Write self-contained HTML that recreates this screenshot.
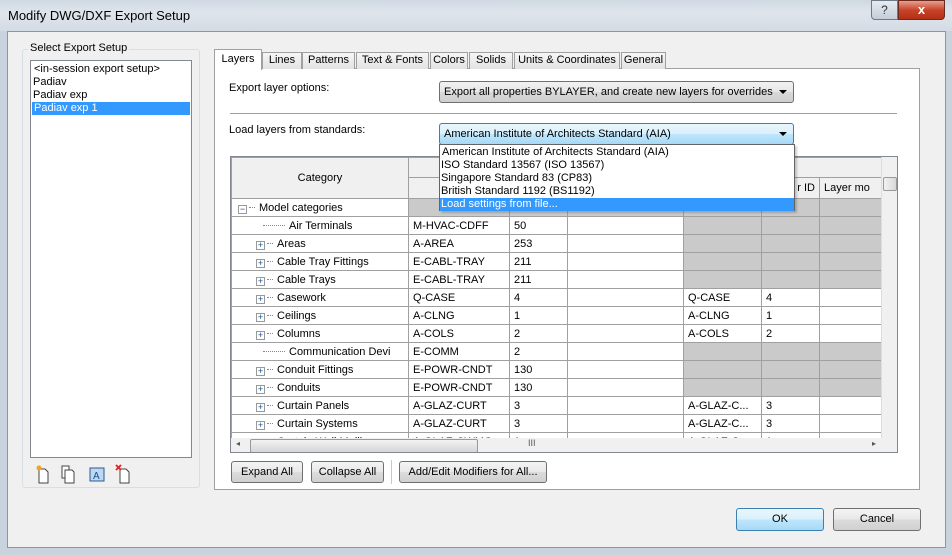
<!DOCTYPE html>
<html><head><style>
*{box-sizing:border-box;margin:0;padding:0}
body{width:952px;height:555px;overflow:hidden;font-family:"Liberation Sans",sans-serif;font-size:11px;color:#000;background:#c9d3dd;position:relative}
.abs{position:absolute}
.title{left:0;top:0;width:952px;height:31px;background:linear-gradient(#cfd8e2,#dfe5ec 40%,#d3dbe4);}
.client{left:7px;top:31px;width:939px;height:517px;background:#f0f0f0;border:1px solid #8a96a3}
.btn{position:absolute;border:1px solid #707070;border-radius:3px;background:linear-gradient(#f4f4f4,#e8e8e8 50%,#dcdcdc 51%,#d0d0d0);text-align:center;line-height:20px}
.tab{position:absolute;top:52px;height:17px;border:1px solid #a0a0a0;border-bottom:none;background:linear-gradient(#f6f6f6,#e2e2e2);line-height:15px;text-align:center;white-space:nowrap;overflow:hidden}
.combo{position:absolute;border:1px solid #707070;border-radius:3px;background:linear-gradient(#f2f2f2,#e6e6e6 50%,#d8d8d8 51%,#cfcfcf);padding-left:4px;line-height:20px;white-space:nowrap}
.arr{position:absolute;right:6px;top:8px;width:0;height:0;border-left:4px solid transparent;border-right:4px solid transparent;border-top:4px solid #000}
table{border-collapse:collapse;table-layout:fixed}
td{border:1px solid #a0a0a0;height:18px;padding:0 4px;white-space:nowrap;overflow:hidden;background:#fff}
.h{background:repeating-conic-gradient(#a8a8a8 0 25%,#ececec 0 50%) 0 0/2px 2px}
.pl{display:inline-block;width:9px;height:9px;border:1px solid #999;font-size:9px;line-height:7px;text-align:center;color:#1c4e91;margin-left:20px;margin-right:2px;vertical-align:-1px;background:#fff}
.dl{display:inline-block;width:6px;border-top:1px dotted #888;vertical-align:3px;margin-right:4px}
.lf{display:inline-block;width:22px;border-top:1px dotted #888;vertical-align:3px;margin-left:27px;margin-right:4px}
</style></head><body>
<div class="abs title"></div>
<div class="abs" style="left:8px;top:8px;font-size:13px">Modify DWG/DXF Export Setup</div>
<div class="abs" style="left:871px;top:0;width:27px;height:20px;border:1px solid #6d7a88;border-radius:0 0 0 4px;background:linear-gradient(#e7ecf1,#c4cdd7);text-align:center;font-size:12px;line-height:18px;color:#333">?</div>
<div class="abs" style="left:898px;top:0;width:47px;height:20px;border:1px solid #6b2a20;border-radius:0 0 4px 0;background:linear-gradient(#e8a08e,#c7442b 50%,#b32f16);text-align:center;color:#fff;font-weight:bold;font-size:13px;line-height:18px">x</div>
<div class="abs client"></div>

<div class="abs" style="left:22px;top:49px;width:178px;height:439px;border:1px solid #d5dfe5;border-radius:3px"></div>
<div class="abs" style="left:28px;top:42px;background:#f0f0f0;padding:0 2px">Select Export Setup</div>
<div class="abs" style="left:30px;top:60px;width:162px;height:398px;border:1px solid #828790;background:#fff;line-height:13px;padding-top:2px">
<div style="padding-left:3px">&lt;in-session export setup&gt;</div>
<div style="padding-left:2px">Padiav</div>
<div style="padding-left:2px">Padiav exp</div>
<div style="padding-left:2px;background:#3399ff;color:#fff;margin:0 1px">Padiav exp 1</div>
</div>
<svg class="abs" style="left:34px;top:464px" width="110" height="20">
<path d="M5 5h6l3 3v11H5z" fill="#fff" stroke="#444"/><circle cx="5" cy="4" r="2.5" fill="#f2a41b"/>
<path d="M28 2h7v12h-7z" fill="#fff" stroke="#444"/><path d="M31 6h7l2 2v11h-9z" fill="#fff" stroke="#444"/>
<rect x="56" y="4" width="14" height="13" fill="#bcd8f2" stroke="#2a5a8a"/><text x="59" y="15" font-size="10" fill="#1c4e91" font-family="Liberation Sans">A</text>
<path d="M86 5h6l3 3v11h-9z" fill="#fff" stroke="#444"/><path d="M82 1l5 5M87 1l-5 5" stroke="#d22" stroke-width="1.8"/>
</svg>

<div class="abs" style="left:214px;top:68px;width:706px;height:422px;border:1px solid #a0a0a0;background:#fff"></div>
<div class="tab" style="left:262px;width:40px">Lines</div>
<div class="tab" style="left:302px;width:53px">Patterns</div>
<div class="tab" style="left:356px;width:73px">Text &amp; Fonts</div>
<div class="tab" style="left:430px;width:38px">Colors</div>
<div class="tab" style="left:469px;width:44px">Solids</div>
<div class="tab" style="left:514px;width:106px">Units &amp; Coordinates</div>
<div class="tab" style="left:621px;width:45px">General</div>
<div class="tab" style="left:214px;top:49px;width:48px;height:21px;background:#fff;line-height:18px">Layers</div>

<div class="abs" style="left:229px;top:82px">Export layer options:</div>
<div class="combo" style="left:439px;top:81px;width:355px;height:22px">Export all properties BYLAYER, and create new layers for overrides<div class="arr"></div></div>
<div class="abs" style="left:230px;top:113px;width:667px;height:1px;background:#a0a0a0"></div>
<div class="abs" style="left:229px;top:124px">Load layers from standards:</div>

<div class="abs" style="left:230px;top:156px;width:668px;height:297px;border:1px solid #828790;overflow:hidden;background:#fff">
<table style="width:651px">
<colgroup><col style="width:177px"><col style="width:101px"><col style="width:58px"><col style="width:116px"><col style="width:78px"><col style="width:58px"><col style="width:63px"></colgroup>
<tr><td rowspan="2" style="background:#f0f0f0;text-align:center;height:41px">Category</td><td colspan="3" style="background:#f0f0f0;height:20px"></td><td colspan="3" style="background:#f0f0f0;text-align:center">Cut</td></tr>
<tr><td style="background:#f0f0f0;height:21px"></td><td style="background:#f0f0f0"></td><td style="background:#f0f0f0"></td><td style="background:#f0f0f0"></td><td style="background:#f0f0f0;text-align:right">r ID</td><td style="background:#f0f0f0">Layer mo</td></tr>
<tr><td><span class="pl" style="margin-left:2px">−</span><span class="dl"></span>Model categories</td><td class="h"></td><td class="h"></td><td class="h"></td><td class="h"></td><td class="h"></td><td class="h"></td></tr>
<tr><td><span class="lf"></span>Air Terminals</td><td>M-HVAC-CDFF</td><td>50</td><td></td><td class="h"></td><td class="h"></td><td class="h"></td></tr>
<tr><td><span class="pl">+</span><span class="dl"></span>Areas</td><td>A-AREA</td><td>253</td><td></td><td class="h"></td><td class="h"></td><td class="h"></td></tr>
<tr><td><span class="pl">+</span><span class="dl"></span>Cable Tray Fittings</td><td>E-CABL-TRAY</td><td>211</td><td></td><td class="h"></td><td class="h"></td><td class="h"></td></tr>
<tr><td><span class="pl">+</span><span class="dl"></span>Cable Trays</td><td>E-CABL-TRAY</td><td>211</td><td></td><td class="h"></td><td class="h"></td><td class="h"></td></tr>
<tr><td><span class="pl">+</span><span class="dl"></span>Casework</td><td>Q-CASE</td><td>4</td><td></td><td>Q-CASE</td><td>4</td><td></td></tr>
<tr><td><span class="pl">+</span><span class="dl"></span>Ceilings</td><td>A-CLNG</td><td>1</td><td></td><td>A-CLNG</td><td>1</td><td></td></tr>
<tr><td><span class="pl">+</span><span class="dl"></span>Columns</td><td>A-COLS</td><td>2</td><td></td><td>A-COLS</td><td>2</td><td></td></tr>
<tr><td><span class="lf"></span>Communication Devi</td><td>E-COMM</td><td>2</td><td></td><td class="h"></td><td class="h"></td><td class="h"></td></tr>
<tr><td><span class="pl">+</span><span class="dl"></span>Conduit Fittings</td><td>E-POWR-CNDT</td><td>130</td><td></td><td class="h"></td><td class="h"></td><td class="h"></td></tr>
<tr><td><span class="pl">+</span><span class="dl"></span>Conduits</td><td>E-POWR-CNDT</td><td>130</td><td></td><td class="h"></td><td class="h"></td><td class="h"></td></tr>
<tr><td><span class="pl">+</span><span class="dl"></span>Curtain Panels</td><td>A-GLAZ-CURT</td><td>3</td><td></td><td>A-GLAZ-C...</td><td>3</td><td></td></tr>
<tr><td><span class="pl">+</span><span class="dl"></span>Curtain Systems</td><td>A-GLAZ-CURT</td><td>3</td><td></td><td>A-GLAZ-C...</td><td>3</td><td></td></tr>
<tr><td><span class="pl">+</span><span class="dl"></span>Curtain Wall Mullions</td><td>A-GLAZ-CWMG</td><td>1</td><td></td><td>A-GLAZ-C...</td><td>1</td><td></td></tr>
</table>
<div class="abs" style="left:650px;top:0;width:17px;height:282px;background:#f0f0f0;border-left:1px solid #ddd"></div>
<div class="abs" style="left:652px;top:20px;width:14px;height:14px;border:1px solid #999;border-radius:2px;background:linear-gradient(90deg,#f2f2f2,#d8d8d8)"></div>
<div class="abs" style="left:0;top:281px;width:667px;height:15px;background:#f0f0f0"></div>
<div class="abs" style="left:19px;top:282px;width:228px;height:14px;border:1px solid #999;border-radius:2px;background:linear-gradient(#f2f2f2,#d6d6d6)"></div>
<div class="abs" style="left:5px;top:282px;font-size:8px;color:#555">◂</div>
<div class="abs" style="left:641px;top:282px;font-size:8px;color:#555">▸</div>
<div class="abs" style="left:297px;top:281px;font-size:9px;color:#555">III</div>
</div>

<div class="combo" style="left:439px;top:123px;width:355px;height:22px;border-color:#3c7fb1;background:linear-gradient(#eaf6fd,#d9f0fc 50%,#bee6fd 51%,#a7d9f5)">American Institute of Architects Standard (AIA)<div class="arr"></div></div>
<div class="abs" style="left:439px;top:144px;width:356px;height:67px;border:1px solid #646464;background:#fff;line-height:13px;padding-top:1px;box-shadow:2px 2px 2px rgba(0,0,0,.2)">
<div style="padding-left:2px">American Institute of Architects Standard (AIA)</div>
<div style="padding-left:1px">ISO Standard 13567 (ISO 13567)</div>
<div style="padding-left:1px">Singapore Standard 83 (CP83)</div>
<div style="padding-left:1px">British Standard 1192 (BS1192)</div>
<div style="padding-left:1px;background:#3399ff;color:#fff">Load settings from file...</div>
</div>

<div class="btn" style="left:231px;top:461px;width:72px;height:22px">Expand All</div>
<div class="btn" style="left:311px;top:461px;width:73px;height:22px">Collapse All</div>
<div class="abs" style="left:391px;top:460px;width:1px;height:24px;background:#c8c8c8"></div>
<div class="btn" style="left:399px;top:461px;width:148px;height:22px">Add/Edit Modifiers for All...</div>
<div class="btn" style="left:736px;top:508px;width:88px;height:23px;border-color:#3c7fb1;background:linear-gradient(#eaf6fd,#d9f0fc 50%,#bee6fd 51%,#a7d9f5)">OK</div>
<div class="btn" style="left:833px;top:508px;width:88px;height:23px">Cancel</div>
</body></html>
